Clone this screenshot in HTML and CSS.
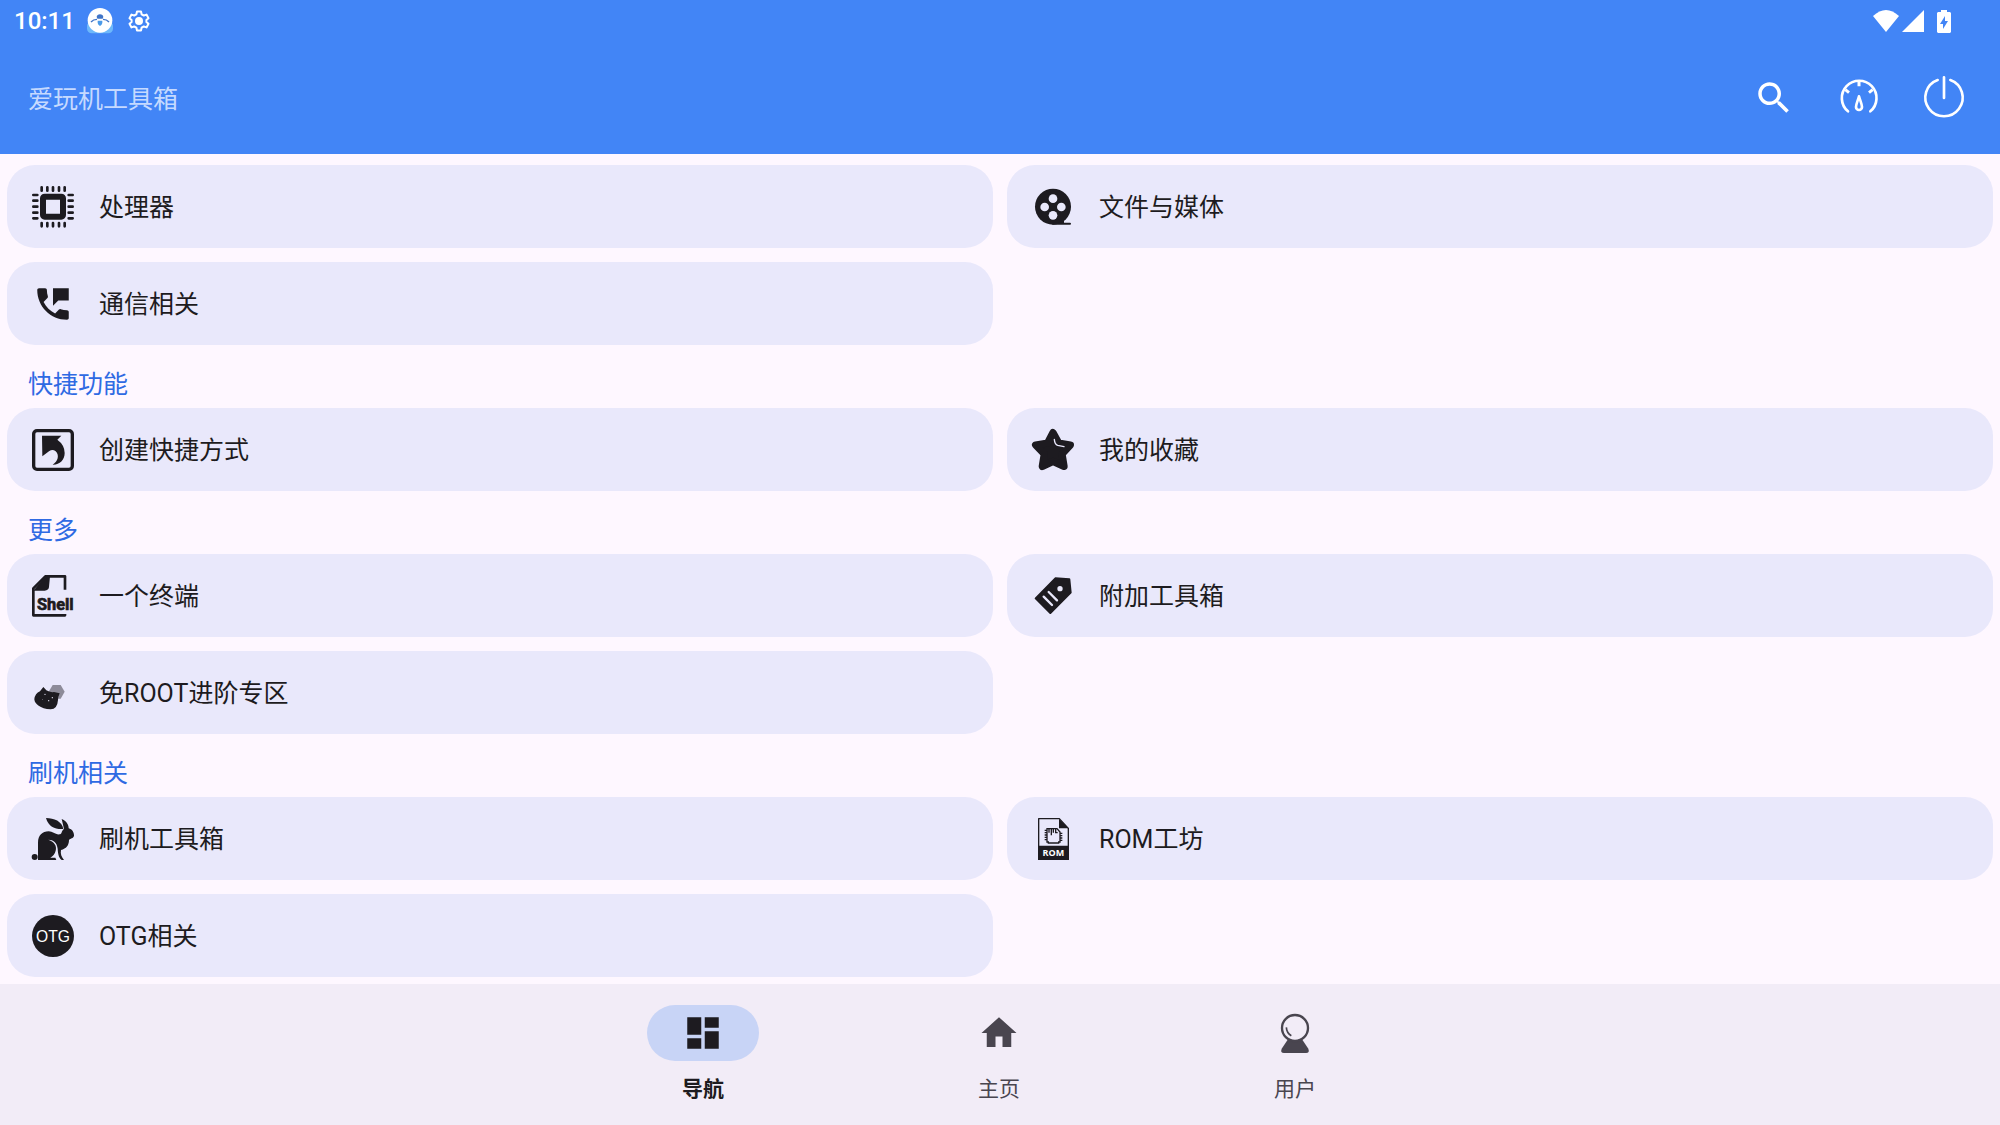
FILE: index.html
```html
<!DOCTYPE html>
<html lang="zh-CN">
<head>
    <meta charset="UTF-8">
    <meta name="viewport" content="width=device-width, initial-scale=1.0">
    <title>爱玩机工具箱</title>
    <link rel="stylesheet" href="styles.css">
</head>
<body>
    <header class="header">
        <div class="status-bar">
            <span class="clock">10:11</span>
            <svg class="status-icon app-icon" viewBox="0 0 78 78">
                <rect x="0" y="40" width="78" height="36" rx="14" fill="#6db8fb"/>
                <circle cx="39" cy="37" r="37" fill="#fff"/>
                <path d="M29 27Q30 19 39 19T49 27L47 32H31Z" fill="#3f74c8"/>
                <path d="M32 38H46V45Q45 51 39 54Q33 51 32 45Z" fill="#4b9ae8"/>
                <path d="M12 42Q19 34 30 34M66 42Q59 34 48 34" fill="none" stroke="#3f74c8" stroke-width="4"/>
            </svg>
            <svg class="status-icon gear-icon" viewBox="0 0 24 24">
                <path d="M10 2.500H14L14.600 5.300L16.800 6.500L19.500 5.600L21.500 9.200L19.400 11V13L21.500 14.800L19.500 18.400L16.800 17.500L14.600 18.700L14 21.500H10L9.400 18.700L7.200 17.500L4.500 18.400L2.500 14.800L4.600 13V11L2.500 9.200L4.500 5.600L7.200 6.500L9.400 5.300Z" fill="none" stroke="#fff" stroke-width="2" stroke-linejoin="round"/>
                <circle cx="12" cy="12" r="4" fill="#fff"/>
            </svg>
            <div class="status-right">
                <svg class="wifi-icon" viewBox="0 0 26 22" fill="#fff"><path d="M0 6Q13 -6 26 6L13 22Z"/></svg>
                <svg class="signal-icon" viewBox="0 0 22 22" fill="#fff"><path d="M22 0V22H0Z"/></svg>
                <svg class="battery-icon" viewBox="0 0 14 23"><path d="M4 0H10V2H13L14 3V22L13 23H1L0 22V3L1 2H4Z" fill="#fff"/><path d="M8 6L3 14H6V19L11 11H8Z" fill="#4285f6"/></svg>
            </div>
        </div>
        <div class="toolbar">
            <h1 class="title">爱玩机工具箱</h1>
            <button class="tool-button" aria-label="搜索">
                <svg class="icon" viewBox="0 0 24 24" fill="#fff"><path d="M15.500 14h-.790l-.280-.270C15.410 12.590 16 11.110 16 9.500 16 5.910 13.090 3 9.500 3S3 5.910 3 9.500 5.910 16 9.500 16c1.610 0 3.090-.590 4.230-1.570l.270.280v.790l5 4.990L20.490 19l-4.990-5zm-6 0C7.010 14 5 11.990 5 9.500S7.010 5 9.500 5 14 7.010 14 9.500 11.990 14 9.500 14z"/></svg>
            </button>
            <button class="tool-button" aria-label="性能">
                <svg class="icon" viewBox="0 0 126 126" fill="none" stroke="#fff" stroke-width="8" stroke-linecap="round" stroke-linejoin="round">
                    <path d="M30 103A52 52 0 1 1 97 103"/>
                    <path d="M63 14V28M22 38L33 47M104 38L93 47" stroke-width="9" stroke-linecap="butt"/>
                    <path d="M63 58C59 72 54 82 54 90A9 9 0 0 0 72 90C72 82 67 72 63 58Z" stroke-width="8"/>
                </svg>
            </button>
            <button class="tool-button" aria-label="电源">
                <svg class="icon" viewBox="0 0 126 126" fill="none" stroke="#fff" stroke-width="8" stroke-linecap="round">
                    <path d="M44 9A56 56 0 1 0 82 9M63 1V63"/>
                </svg>
            </button>
        </div>
    </header>

    <main class="content">
        <section class="cards">
            <a class="card" href="#">
                <svg class="icon" viewBox="0 0 126 126" stroke="#1d1b20" stroke-width="8" stroke-linecap="round">
                    <rect x="33" y="32" width="60" height="60" rx="5" fill="none" stroke-width="18"/>
                    <path d="M29 4V14M46 4V14M63 4V14M81 4V14M98 4V14M29 111V121M46 111V121M63 111V121M81 111V121M98 111V121M4 27H16M4 44H16M4 62H16M4 80H16M4 97H16M110 27H122M110 44H122M110 62H122M110 80H122M110 97H122"/>
                </svg>
                <span class="card-label">处理器</span>
            </a>
            <a class="card" href="#">
                <svg class="icon" viewBox="0 0 126 126">
                    <circle cx="63" cy="62" r="54" fill="#1d1b20"/>
                    <path d="M63 113H114" stroke="#1d1b20" stroke-width="6" stroke-linecap="round"/>
                    <path d="M84 106L96 104V114H78Z" fill="#1d1b20"/>
                    <g fill="#e9e8fb"><circle cx="63" cy="38" r="13"/><circle cx="38" cy="63" r="13"/><circle cx="88" cy="63" r="13"/><circle cx="63" cy="88" r="13"/></g>
                </svg>
                <span class="card-label">文件与媒体</span>
            </a>
            <a class="card" href="#">
                <svg class="icon" viewBox="0 0 24 24" fill="#1d1b20"><path d="M20 15.500c-1.250 0-2.450-.200-3.570-.570-.350-.110-.740-.030-1.020.240l-2.200 2.200c-2.830-1.440-5.150-3.750-6.590-6.580l2.200-2.210c.280-.270.360-.660.250-1.010C8.700 6.450 8.500 5.250 8.500 4c0-.550-.450-1-1-1H4c-.550 0-1 .450-1 1 0 9.390 7.610 17 17 17 .550 0 1-.450 1-1v-3.500c0-.550-.450-1-1-1zM12 3v10l3-3h6V3h-9z"/></svg>
                <span class="card-label">通信相关</span>
            </a>
        </section>

        <h2 class="section-title">快捷功能</h2>
        <section class="cards">
            <a class="card" href="#">
                <svg class="icon" viewBox="0 0 126 126">
                    <rect x="5" y="5" width="116" height="116" rx="10" fill="none" stroke="#1d1b20" stroke-width="10"/>
                    <path d="M30 20H88L76 32Q98 48 98 72C98 94 82 108 62 107C78 98 83 78 71 67Q62 60 52 66L31 82Z" fill="#1d1b20"/>
                </svg>
                <span class="card-label">创建快捷方式</span>
            </a>
            <a class="card" href="#">
                <svg class="icon" viewBox="0 0 126 126" stroke-linejoin="round" stroke-linecap="round">
                    <path d="M63 11L80 42L115 48L90 75L96 112L63 97L31 112L37 75L11 48L47 42Z" fill="#1d1b20" stroke="#1d1b20" stroke-width="22"/>
                    <path d="M67 31Q68 46 77 49L96 53" fill="none" stroke="#e9e8fb" stroke-width="4"/>
                </svg>
                <span class="card-label">我的收藏</span>
            </a>
        </section>

        <h2 class="section-title">更多</h2>
        <section class="cards">
            <a class="card" href="#">
                <svg class="icon" viewBox="0 0 126 126">
                    <path d="M99 44V4H40L4 40V121H99V117" fill="none" stroke="#1d1b20" stroke-width="8" stroke-linejoin="round"/>
                    <path d="M40 4H54L51 36Q50 46 38 47H4Z" fill="#1d1b20"/>
                    <text class="shell-text" x="15" y="106">Shell</text>
                </svg>
                <span class="card-label">一个终端</span>
            </a>
            <a class="card" href="#">
                <svg class="icon" viewBox="0 0 126 126">
                    <path d="M70 10L112 13L116 53L55 114L11 70Z" fill="#1d1b20" stroke="#1d1b20" stroke-width="6" stroke-linejoin="round"/>
                    <circle cx="84" cy="41" r="8" fill="#e9e8fb"/>
                    <path d="M50 51L75 76M35 65L60 90" stroke="#e9e8fb" stroke-width="7" stroke-linecap="round"/>
                </svg>
                <span class="card-label">附加工具箱</span>
            </a>
            <a class="card" href="#">
                <svg class="icon" viewBox="0 0 126 126">
                    <path d="M62 39H86L98 59L86 80H62L50 59Z" fill="#8d8b99"/>
                    <path d="M7 82Q9 64 24 58L34 45L43 55Q54 62 66 60L83 64Q78 74 78 84Q76 112 56 112Q32 110 20 101Q8 94 7 82Z" fill="#1d1b20"/>
                    <g fill="#e9e8fb"><circle cx="61" cy="77" r="2"/><circle cx="39" cy="67" r="2"/><circle cx="32" cy="82" r="1"/><circle cx="50" cy="86" r="2"/></g>
                </svg>
                <span class="card-label">免ROOT进阶专区</span>
            </a>
        </section>

        <h2 class="section-title">刷机相关</h2>
        <section class="cards">
            <a class="card" href="#">
                <svg class="icon" viewBox="0 0 126 126" fill="#1d1b20">
                    <path d="M42 0C66 0 90 10 94 33C72 35 50 28 42 0Z"/>
                    <path d="M89 3C103 9 110 19 110 31C120 33 127 44 126 54C123 62 117 60 111 66C111 82 103 92 87 96C85 108 88 116 96 126H89C79 117 78 106 77 92C75 74 64 65 49 65C68 72 75 84 71 98C69 108 62 114 55 119H70L73 126H18V74C18 52 31 40 50 40C63 40 69 51 84 49C91 47 87 40 96 33Z"/>
                    <circle cx="8" cy="117" r="9"/>
                </svg>
                <span class="card-label">刷机工具箱</span>
            </a>
            <a class="card" href="#">
                <svg class="icon" viewBox="0 0 126 126">
                    <path d="M20 2H82L109 31V124H20Z" fill="none" stroke="#1d1b20" stroke-width="4" stroke-linejoin="round"/>
                    <path d="M81 2V31H110ZM18 83H111V126H18Z" fill="#1d1b20"/>
                    <path d="M45 32H75L84 42V72H80V75H49V72H45ZM45 37H38M45 44H38M45 51H38M45 58H38M45 65H38M84 46H91M84 53H91M84 60H91M84 67H91" fill="none" stroke="#1d1b20" stroke-width="4"/>
                    <path d="M51 32V44M58 32V52M64 32V44M71 32V44H77" stroke="#1d1b20" stroke-width="4" fill="none"/>
                    <text class="rom-text" x="64" y="113">ROM</text>
                </svg>
                <span class="card-label">ROM工坊</span>
            </a>
            <a class="card" href="#">
                <svg class="icon" viewBox="0 0 126 126">
                    <circle cx="63" cy="63" r="63" fill="#1d1b20"/>
                    <text class="otg-text" x="63" y="80">OTG</text>
                </svg>
                <span class="card-label">OTG相关</span>
            </a>
        </section>
    </main>

    <nav class="bottom-nav">
        <a class="nav-item active" href="#">
            <span class="pill"><svg class="icon" viewBox="0 0 24 24" fill="currentColor"><path d="M3 13h8V3H3v10zm0 8h8v-6H3v6zm10 0h8V11h-8v10zm0-18v6h8V3h-8z"/></svg></span>
            <span>导航</span>
        </a>
        <a class="nav-item" href="#">
            <span class="pill"><svg class="icon" viewBox="0 0 24 24" fill="currentColor"><path d="M10 20v-6h4v6h5v-8h3L12 3 2 12h3v8z"/></svg></span>
            <span>主页</span>
        </a>
        <a class="nav-item" href="#">
            <span class="pill">
                <svg class="icon" viewBox="0 0 126 126">
                    <path d="M42 82H84L103 110Q108 123 96 123H30Q18 123 23 110Z" fill="currentColor"/>
                    <circle cx="63" cy="48" r="39" fill="#f2ecf7" stroke="currentColor" stroke-width="7"/>
                    <path d="M37 46Q38 63 52 71" fill="none" stroke="currentColor" stroke-width="5"/>
                </svg>
            </span>
            <span>用户</span>
        </a>
    </nav>
</body>
</html>
```
FILE: styles.css
```css
* {
    box-sizing: border-box;
}
body {
    margin: 0;
    min-height: 100vh;
    display: flex;
    flex-direction: column;
    font-family: Roboto, 'Noto Sans CJK SC', sans-serif;
    font-size: 25px;
    background-color: #fef7ff;
    color: #1d1b20;
}
a {
    color: inherit;
    text-decoration: none;
}
svg {
    display: block;
    flex-shrink: 0;
    overflow: visible;
}
.icon {
    width: 42px;
    height: 42px;
}
.header {
    background-color: #4285f6;
    color: #fff;
}
.status-bar {
    display: flex;
    align-items: center;
    height: 42px;
    padding: 0 49px 0 14px;
}
.clock {
    font-size: 24px;
    font-weight: 500;
    margin-right: 12px;
}
.app-icon {
    width: 26px;
    height: 26px;
    margin-right: 14px;
}
.gear-icon {
    width: 24px;
    height: 24px;
}
.status-right {
    display: flex;
    align-items: center;
    margin-left: auto;
}
.wifi-icon {
    width: 26px;
    height: 22px;
    margin-right: 3px;
}
.signal-icon {
    width: 22px;
    height: 22px;
    margin-right: 13px;
}
.battery-icon {
    width: 14px;
    height: 23px;
}
.toolbar {
    display: flex;
    align-items: center;
    height: 112px;
    padding: 0 14px 0 28px;
}
.title {
    flex-grow: 1;
    margin: 0;
    padding-bottom: 2px;
    font-size: 25px;
    font-weight: 400;
    color: #c6daff;
}
.tool-button {
    display: flex;
    justify-content: center;
    align-items: center;
    width: 85px;
    height: 84px;
    padding: 0;
    border: none;
    background: none;
    cursor: pointer;
}
.content {
    flex-grow: 1;
    padding: 11px 7px 7px;
}
.cards {
    display: grid;
    grid-template-columns: 1fr 1fr;
    gap: 14px;
}
.card {
    display: flex;
    align-items: center;
    gap: 25px;
    height: 83px;
    padding: 0 25px;
    border-radius: 28px;
    background-color: #e9e8fb;
}
.card-label {
    padding-bottom: 3px;
}
.section-title {
    height: 63px;
    margin: 0;
    padding: 16px 21px 0;
    font-size: 25px;
    line-height: 48px;
    font-weight: 400;
    color: #2f6ae3;
}
.shell-text {
    font-family: Roboto, sans-serif;
    font-size: 49px;
    font-weight: bold;
    fill: #1d1b20;
    stroke: #1d1b20;
    stroke-width: 2px;
}
.rom-text {
    font-family: 'Open Sans', sans-serif;
    font-size: 27px;
    font-weight: bold;
    text-anchor: middle;
    fill: #fff;
}
.otg-text {
    font-family: 'Liberation Sans', sans-serif;
    font-size: 47px;
    text-anchor: middle;
    fill: #fff;
}
.bottom-nav {
    display: flex;
    justify-content: center;
    height: 141px;
    padding: 21px 2px 0 0;
    background-color: #f2ecf7;
}
.nav-item {
    display: flex;
    flex-direction: column;
    align-items: center;
    gap: 12px;
    width: 296px;
    font-size: 21px;
    line-height: 32px;
    color: #49454f;
}
.pill {
    display: flex;
    justify-content: center;
    align-items: center;
    width: 112px;
    height: 56px;
    border-radius: 28px;
}
.active {
    font-weight: 700;
    color: #1d1b20;
}
.active .pill {
    background-color: #c8d4f6;
}
```
